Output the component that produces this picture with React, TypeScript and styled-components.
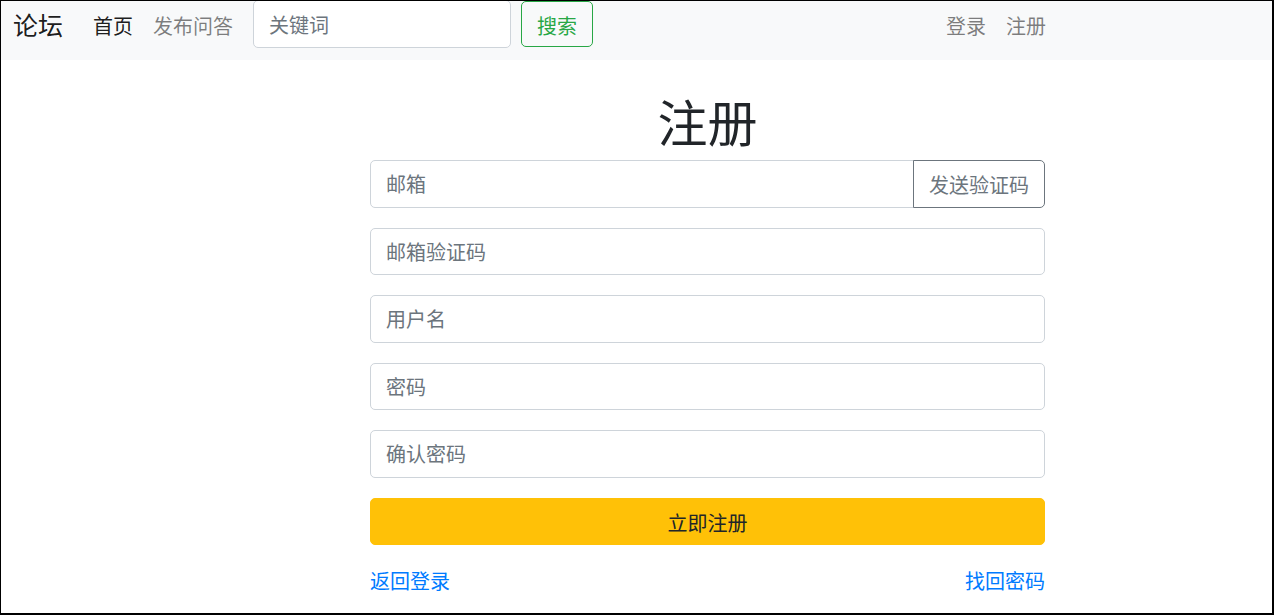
import styled, { createGlobalStyle } from 'styled-components'

const GlobalStyle = createGlobalStyle`
  html, body {
    margin: 0;
    padding: 0;
    background: #fff;
  }
  body {
    font-family: "Liberation Sans", "Noto Sans CJK SC", sans-serif;
    font-size: 20px;
    line-height: 30px;
    color: #212529;
  }
  * {
    box-sizing: border-box;
  }
  input::placeholder {
    color: #6c757d;
    opacity: 1;
  }
`

const Frame = styled.div`
  width: 1274px;
  height: 615px;
  border-style: solid;
  border-color: #000;
  border-width: 1px 2px 2px 1px;
  overflow: hidden;
`

const Navbar = styled.nav`
  display: flex;
  align-items: center;
  height: 59px;
  padding: 0 216px 8px 12px;
  background: #f8f9fa;
`

const Brand = styled.a`
  font-size: 25px;
  line-height: 37px;
  color: rgba(0, 0, 0, 0.9);
  margin-right: 20px;
  text-decoration: none;
`

const NavList = styled.ul`
  display: flex;
  margin: 0;
  padding: 0;
  list-style: none;
`

const NavLink = styled.a<{ $active?: boolean }>`
  display: block;
  padding: 0 10px;
  color: ${({ $active }) => ($active ? 'rgba(0, 0, 0, 0.9)' : 'rgba(0, 0, 0, 0.5)')};
  text-decoration: none;
`

const SearchForm = styled.form`
  display: flex;
  align-self: flex-start;
  margin-top: -1px;
  margin-left: 10px;
`

const SearchInput = styled.input`
  width: 258px;
  height: 48px;
  padding: 10px 15px 6px;
  font: inherit;
  color: #495057;
  border: 1px solid #ced4da;
  border-radius: 5px;
  background: #fff;
  outline: none;
`

const OutlineButton = styled.button<{ $tone: string }>`
  height: 47px;
  padding: 10px 15px 6px;
  font: inherit;
  color: ${({ $tone }) => $tone};
  background: transparent;
  border: 1px solid ${({ $tone }) => $tone};
  border-radius: 5px;
  cursor: pointer;
`

const SearchButton = styled(OutlineButton)`
  margin-left: 10px;
  margin-top: 1px;
  height: 46px;
`

const Spacer = styled.div`
  flex: 1;
`

const Main = styled.main`
  width: 675px;
  margin-left: 369px;
`

const Title = styled.h1`
  margin: 35px 0 5px;
  font-size: 50px;
  line-height: 60px;
  font-weight: 400;
  text-align: center;
`

const Group = styled.div`
  display: flex;
  margin-bottom: 20px;
`

const Field = styled.input<{ $joined?: boolean }>`
  flex: 1;
  min-width: 0;
  height: 47.5px;
  padding: 10px 15px 6px;
  font: inherit;
  color: #495057;
  background: #fff;
  border: 1px solid #ced4da;
  border-radius: ${({ $joined }) => ($joined ? '5px 0 0 5px' : '5px')};
  outline: none;
`

const AppendButton = styled(OutlineButton)`
  height: 47.5px;
  width: 132px;
  padding: 10px 0 6px;
  border-radius: 0 5px 5px 0;
  margin-left: -1px;
`

const SubmitButton = styled.button`
  display: block;
  width: 100%;
  height: 47.5px;
  padding: 10px 0 6px;
  font: inherit;
  color: #212529;
  background: #ffc107;
  border: 1px solid #ffc107;
  border-radius: 5px;
  cursor: pointer;
`

const LinkRow = styled.div`
  display: flex;
  justify-content: space-between;
  margin-top: 22px;
`

const TextLink = styled.a`
  color: #007bff;
  text-decoration: none;
`

export default function App() {
  return (
    <>
      <GlobalStyle />
      <Frame>
        <Navbar>
          <Brand href="#">论坛</Brand>
          <NavList>
            <li>
              <NavLink href="#" $active>首页</NavLink>
            </li>
            <li>
              <NavLink href="#">发布问答</NavLink>
            </li>
          </NavList>
          <SearchForm onSubmit={(e) => e.preventDefault()}>
            <SearchInput placeholder="关键词" />
            <SearchButton type="submit" $tone="#28a745">搜索</SearchButton>
          </SearchForm>
          <Spacer />
          <NavList>
            <li>
              <NavLink href="#">登录</NavLink>
            </li>
            <li>
              <NavLink href="#">注册</NavLink>
            </li>
          </NavList>
        </Navbar>
        <Main>
          <Title>注册</Title>
          <form onSubmit={(e) => e.preventDefault()}>
            <Group>
              <Field $joined placeholder="邮箱" />
              <AppendButton type="button" $tone="#6c757d">发送验证码</AppendButton>
            </Group>
            <Group>
              <Field placeholder="邮箱验证码" />
            </Group>
            <Group>
              <Field placeholder="用户名" />
            </Group>
            <Group>
              <Field type="password" placeholder="密码" />
            </Group>
            <Group>
              <Field type="password" placeholder="确认密码" />
            </Group>
            <SubmitButton type="submit">立即注册</SubmitButton>
          </form>
          <LinkRow>
            <TextLink href="#">返回登录</TextLink>
            <TextLink href="#">找回密码</TextLink>
          </LinkRow>
        </Main>
      </Frame>
    </>
  )
}
